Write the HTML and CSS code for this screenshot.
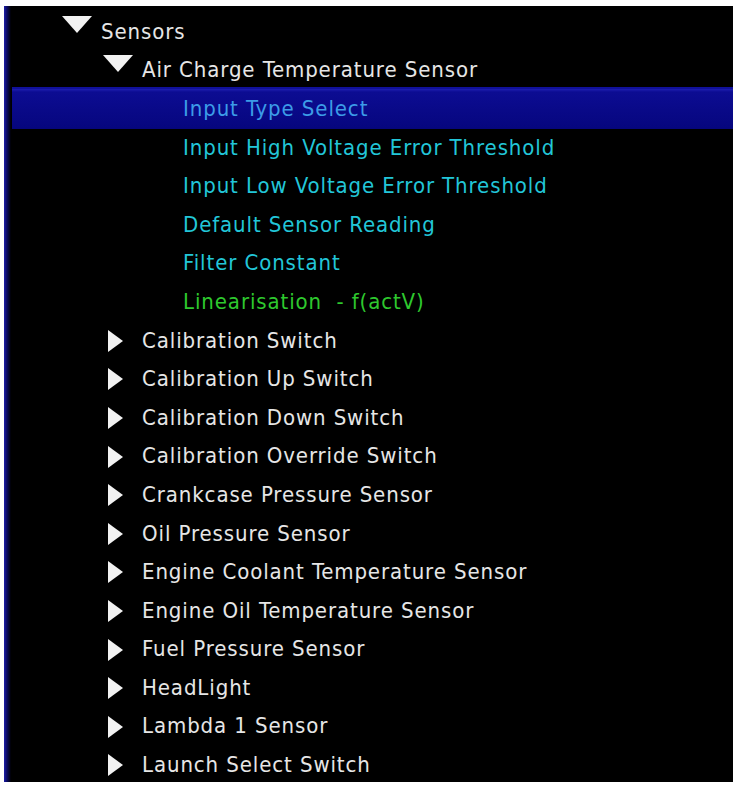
FILE: index.html
```html
<!DOCTYPE html>
<html lang="en">
<head>
    <meta charset="UTF-8">
    <title>Calibration Tree</title>
    <link rel="stylesheet" href="styles.css">
</head>
<body>
    <div class="panel">
        <ul class="tree">
            <li class="row lvl0 white"><span class="toggle open"></span>Sensors</li>
            <li class="row lvl1 white"><span class="toggle open"></span>Air Charge Temperature Sensor</li>
            <li class="row lvl2 cyan selected"><span class="toggle"></span>Input Type Select</li>
            <li class="row lvl2 cyan"><span class="toggle"></span>Input High Voltage Error Threshold</li>
            <li class="row lvl2 cyan"><span class="toggle"></span>Input Low Voltage Error Threshold</li>
            <li class="row lvl2 cyan"><span class="toggle"></span>Default Sensor Reading</li>
            <li class="row lvl2 cyan"><span class="toggle"></span>Filter Constant</li>
            <li class="row lvl2 green"><span class="toggle"></span>Linearisation&nbsp; - f(actV)</li>
            <li class="row lvl1 white"><span class="toggle closed"></span>Calibration Switch</li>
            <li class="row lvl1 white"><span class="toggle closed"></span>Calibration Up Switch</li>
            <li class="row lvl1 white"><span class="toggle closed"></span>Calibration Down Switch</li>
            <li class="row lvl1 white"><span class="toggle closed"></span>Calibration Override Switch</li>
            <li class="row lvl1 white"><span class="toggle closed"></span>Crankcase Pressure Sensor</li>
            <li class="row lvl1 white"><span class="toggle closed"></span>Oil Pressure Sensor</li>
            <li class="row lvl1 white"><span class="toggle closed"></span>Engine Coolant Temperature Sensor</li>
            <li class="row lvl1 white"><span class="toggle closed"></span>Engine Oil Temperature Sensor</li>
            <li class="row lvl1 white"><span class="toggle closed"></span>Fuel Pressure Sensor</li>
            <li class="row lvl1 white"><span class="toggle closed"></span>HeadLight</li>
            <li class="row lvl1 white"><span class="toggle closed"></span>Lambda 1 Sensor</li>
            <li class="row lvl1 white"><span class="toggle closed"></span>Launch Select Switch</li>
        </ul>
    </div>
</body>
</html>
```

FILE: styles.css
```css
body {
    margin: 0;
    padding: 0;
    background-color: #ffffff;
    font-family: "DejaVu Sans Condensed", "DejaVu Sans", sans-serif;
}
.panel {
    margin: 6px 3px 0 4px;
    height: 776px;
    overflow: hidden;
    background: linear-gradient(to right, #1c1ca8 0, #0a0a60 3px, #000000 7px, #000000 100%);
}
.tree {
    list-style: none;
    margin: 0;
    padding: 6px 0 0 8px;
}
.row {
    display: flex;
    align-items: center;
    height: 38.6px;
    font-size: 22px;
    letter-spacing: 0.9px;
    white-space: nowrap;
}
.lvl0 {
    padding-left: 46px;
}
.lvl1 {
    padding-left: 87px;
}
.lvl2 {
    padding-left: 128px;
}
.white {
    color: #e6e6e6;
}
.cyan {
    color: #22c6d8;
}
.green {
    color: #2ec82e;
}
.selected {
    color: #3c9ce8;
    background: linear-gradient(#1e1eb0 0, #0c0c92 3px, #06067e 100%);
    box-shadow: 0 -2px 0 #10109a, 0 1px 0 #06067a;
}
.toggle {
    position: relative;
    flex: 0 0 43px;
    height: 100%;
}
.toggle.open::before {
    content: "";
    position: absolute;
    left: 4px;
    top: 4px;
    border-left: 15px solid transparent;
    border-right: 15px solid transparent;
    border-top: 17px solid #f2f2f2;
}
.toggle.closed::before {
    content: "";
    position: absolute;
    left: 9px;
    top: 9px;
    border-top: 11px solid transparent;
    border-bottom: 11px solid transparent;
    border-left: 15px solid #f2f2f2;
}
```
